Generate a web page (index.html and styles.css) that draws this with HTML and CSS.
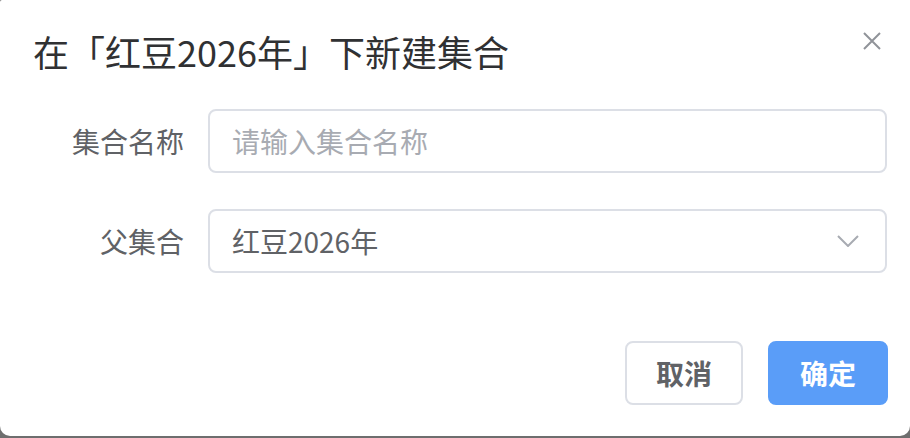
FILE: index.html
```html
<!DOCTYPE html>
<html lang="zh-CN">

<head>
    <meta charset="UTF-8">
    <meta name="viewport" content="width=device-width, initial-scale=1.0">
    <title>新建集合</title>
    <link rel="stylesheet" href="styles.css">
</head>

<body>
    <div class="dialog">
        <div class="dialog-header">
            <span class="dialog-title">在「红豆2026年」下新建集合</span>
            <button class="dialog-close" type="button" aria-label="关闭">
                <svg width="18" height="18" viewBox="0 0 18 18">
                    <path d="M1 1 L17 17 M17 1 L1 17" stroke="#909399" stroke-width="2" fill="none" />
                </svg>
            </button>
        </div>

        <form class="dialog-form">
            <div class="form-item">
                <label class="form-label" for="name">集合名称</label>
                <div class="form-control">
                    <input class="input" type="text" id="name" placeholder="请输入集合名称">
                </div>
            </div>
            <div class="form-item">
                <label class="form-label">父集合</label>
                <div class="form-control select">
                    <span class="select-value">红豆2026年</span>
                    <svg class="select-arrow" width="22" height="12" viewBox="0 0 22 12">
                        <path d="M1 1 L11 11 L21 1" stroke="#a8abb2" stroke-width="2" fill="none" />
                    </svg>
                </div>
            </div>
        </form>

        <div class="dialog-footer">
            <button class="btn" type="button">取消</button>
            <button class="btn btn-primary" type="button">确定</button>
        </div>
    </div>
</body>

</html>
```

FILE: styles.css
```css
body {
    margin: 0;
    background-color: #6e6e6e;
    font-family: "Noto Sans CJK SC", "Noto Sans", sans-serif;
}

.dialog {
    width: 910px;
    height: 436px;
    background-color: #fff;
    border-radius: 2px 0 10px 10px;
    box-sizing: border-box;
    padding-top: 27px;
}

.dialog-header {
    display: flex;
    justify-content: space-between;
    align-items: flex-start;
    padding: 0 29px 0 33px;
    height: 48px;
}

.dialog-title {
    font-size: 36px;
    line-height: 48px;
    color: #303133;
}

.dialog-close {
    margin-top: 5px;
    padding: 0;
    border: none;
    background: none;
    width: 18px;
    height: 18px;
    line-height: 0;
}

.dialog-form {
    display: flex;
    flex-direction: column;
    gap: 36px;
    margin: 34px 0 0 0;
    padding-right: 23px;
}

.form-item {
    display: flex;
    align-items: center;
}

.form-label {
    width: 208px;
    box-sizing: border-box;
    padding-right: 24px;
    text-align: right;
    font-size: 28px;
    color: #606266;
}

.form-control {
    flex: 1;
    height: 64px;
    box-sizing: border-box;
    border: 2px solid #dcdfe6;
    border-radius: 8px;
    display: flex;
    align-items: center;
    padding: 0 26px 0 22px;
}

.input {
    width: 100%;
    border: none;
    outline: none;
    padding: 0;
    font-family: inherit;
    font-size: 28px;
    color: #606266;
}

.input::placeholder {
    color: #a8abb2;
}

.select {
    justify-content: space-between;
}

.select-value {
    font-size: 28px;
    color: #606266;
}

.dialog-footer {
    display: flex;
    justify-content: flex-end;
    gap: 25px;
    margin-top: 68px;
    padding-right: 22px;
}

.btn {
    height: 64px;
    width: 118px;
    border: 2px solid #dcdfe6;
    border-radius: 8px;
    background-color: #fff;
    font-family: inherit;
    font-size: 28px;
    font-weight: bold;
    color: #606266;
}

.btn-primary {
    width: 120px;
    border-color: #5a9df8;
    background-color: #5a9df8;
    color: #fff;
}
```
